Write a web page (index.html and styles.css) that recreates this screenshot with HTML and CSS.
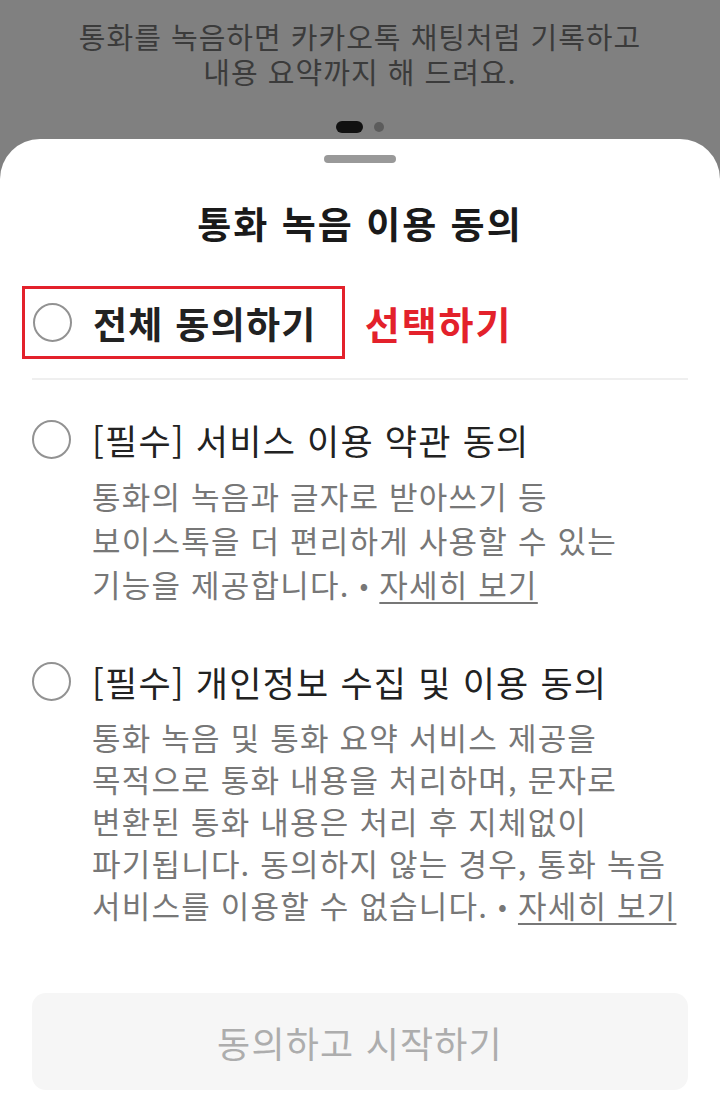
FILE: index.html
```html
<!DOCTYPE html>
<html lang="ko">
<head>
    <meta charset="UTF-8">
    <meta name="viewport" content="width=device-width, initial-scale=1.0">
    <title>통화 녹음 이용 동의</title>
    <link rel="stylesheet" href="styles.css">
</head>
<body>
    <header class="intro">
        <p class="intro_line">통화를 녹음하면 카카오톡 채팅처럼 기록하고</p>
        <p class="intro_line">내용 요약까지 해 드려요.</p>
        <div class="dots">
            <span class="dot dot_active"></span>
            <span class="dot"></span>
        </div>
    </header>

    <section class="sheet">
        <div class="handle"></div>
        <h1 class="sheet_title">통화 녹음 이용 동의</h1>

        <div class="all_row">
            <label class="all_box">
                <span class="radio"></span>
                <span class="all_text">전체 동의하기</span>
            </label>
            <span class="pick_note">선택하기</span>
        </div>
        <hr class="divider">

        <div class="term term_first">
            <div class="term_head">
                <span class="radio"></span>
                <span class="term_title">[필수] 서비스 이용 약관 동의</span>
            </div>
            <p class="term_desc desc_wide">통화의 녹음과 글자로 받아쓰기 등<br>보이스톡을 더 편리하게 사용할 수 있는<br>기능을 제공합니다. <span class="bullet">•</span> <a class="more" href="#">자세히 보기</a></p>
        </div>

        <div class="term term_second">
            <div class="term_head">
                <span class="radio"></span>
                <span class="term_title">[필수] 개인정보 수집 및 이용 동의</span>
            </div>
            <p class="term_desc">통화 녹음 및 통화 요약 서비스 제공을<br>목적으로 통화 내용을 처리하며, 문자로<br>변환된 통화 내용은 처리 후 지체없이<br>파기됩니다. 동의하지 않는 경우, 통화 녹음<br>서비스를 이용할 수 없습니다. <span class="bullet">•</span> <a class="more" href="#">자세히 보기</a></p>
        </div>

        <button class="start_btn" disabled>동의하고 시작하기</button>
    </section>
</body>
</html>
```

FILE: styles.css
```css
* {
    margin: 0;
    padding: 0;
    box-sizing: border-box;
    font-family: 'Noto Sans CJK KR', 'Noto Sans', sans-serif;
}
body {
    width: 720px;
    height: 1098px;
    overflow: hidden;
    background-color: #808080;
}
.intro {
    padding-top: 19px;
    text-align: center;
}
.intro_line {
    height: 35px;
    font-size: 29px;
    line-height: 35px;
    letter-spacing: 1px;
    color: #3b3b3b;
    white-space: nowrap;
}
.dots {
    display: flex;
    justify-content: center;
    align-items: center;
    gap: 11px;
    margin-top: 32px;
    height: 12px;
}
.dot {
    width: 10px;
    height: 10px;
    border-radius: 50%;
    background-color: #5c5c5c;
}
.dot_active {
    width: 27px;
    height: 12px;
    border-radius: 6px;
    background-color: #111;
}
.sheet {
    margin-top: 6px;
    background-color: #fff;
    border-radius: 40px 40px 0 0;
    padding: 16px 32px 0;
    height: 960px;
}
.handle {
    width: 72px;
    height: 8px;
    border-radius: 4px;
    background-color: #999;
    margin: 0 auto;
}
.sheet_title {
    margin-top: 38px;
    text-align: center;
    font-size: 37px;
    line-height: 44px;
    letter-spacing: 2px;
    font-weight: 700;
    color: #1a1a1a;
}
.all_row {
    display: flex;
    align-items: center;
    margin-top: 41px;
    margin-left: -10px;
}
.all_box {
    display: flex;
    align-items: center;
    gap: 21px;
    height: 73px;
    padding: 0 25px 0 8px;
    border: 3px solid #e3212b;
}
.all_text {
    font-size: 37px;
    letter-spacing: 1.3px;
    font-weight: 700;
    color: #222;
    white-space: nowrap;
}
.pick_note {
    margin-left: 20px;
    font-size: 38px;
    letter-spacing: 2px;
    font-weight: 700;
    color: #e3212b;
}
.radio {
    flex: none;
    width: 39px;
    height: 39px;
    border: 2.5px solid #929292;
    border-radius: 50%;
}
.divider {
    margin-top: 19px;
    border: none;
    height: 2px;
    background-color: #efefef;
}
.term_first {
    margin-top: 37px;
}
.term_second {
    margin-top: 53px;
}
.term_head {
    display: flex;
    align-items: center;
    gap: 21px;
    height: 44px;
}
.term_title {
    font-size: 35px;
    letter-spacing: 1.2px;
    color: #222;
    white-space: nowrap;
}
.term_desc {
    margin-top: 13px;
    padding-left: 60px;
    font-size: 31px;
    line-height: 42px;
    letter-spacing: 1.2px;
    color: #777;
    white-space: nowrap;
}
.desc_wide {
    line-height: 44px;
}
.bullet {
    font-size: 26px;
    vertical-align: 2px;
}
.more {
    color: #777;
    text-decoration: underline;
    text-underline-offset: 5px;
    text-decoration-thickness: 2px;
}
.start_btn {
    display: block;
    width: 100%;
    height: 97px;
    margin-top: 67px;
    border: none;
    border-radius: 14px;
    background-color: #f6f6f6;
    font-size: 36px;
    letter-spacing: 1.2px;
    color: #adadad;
}
```
